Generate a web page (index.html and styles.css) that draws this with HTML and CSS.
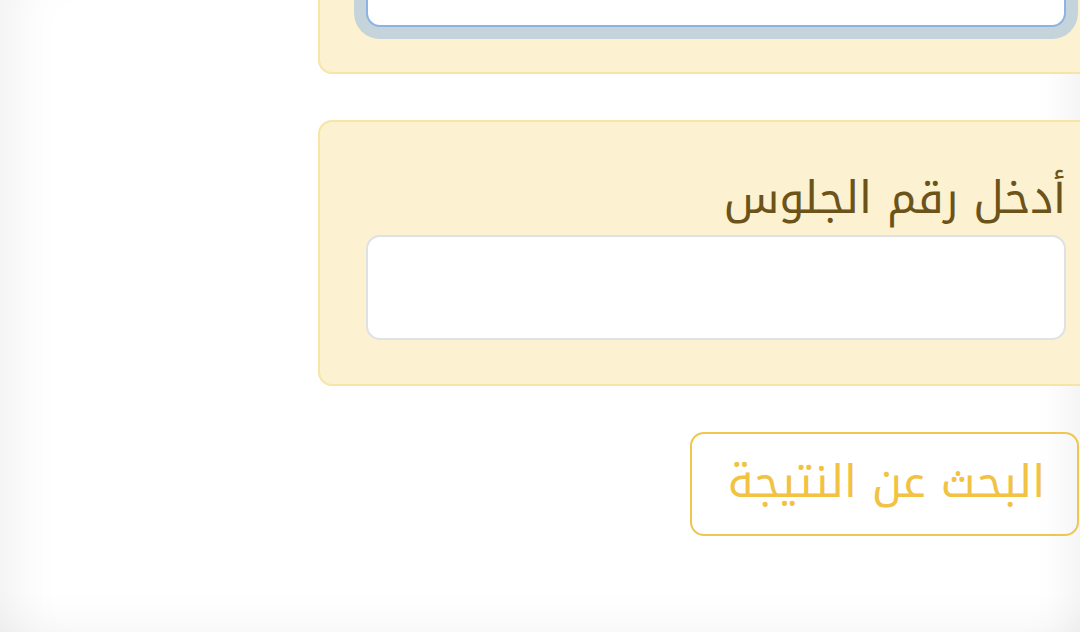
FILE: index.html
```html
<!DOCTYPE html>
<html lang="ar" dir="rtl">
<head>
  <meta charset="UTF-8" />
  <meta name="viewport" content="width=device-width, initial-scale=1.0"/>
  <title>نتيجة الامتحان</title>
  <link rel="stylesheet" href="styles.css">
</head>
<body>
  <div class="page">
    <div class="content">
      <div class="field-card first">
        <input type="text" id="name" class="field-input focused" />
      </div>

      <div class="field-card">
        <label class="field-label" for="seat">أدخل رقم الجلوس</label>
        <input type="text" id="seat" class="field-input" />
      </div>

      <div class="actions">
        <button class="search-btn">البحث عن النتيجة</button>
      </div>
    </div>
  </div>
</body>
</html>
```

FILE: styles.css
```css
* { margin: 0; padding: 0; box-sizing: border-box; }

html, body {
  height: 100%;
  overflow: hidden;
}

body {
  font-family: "Noto Kufi Arabic", "DejaVu Sans", sans-serif;
  background: #ffffff;
}

.page {
  height: 632px;
  width: 1080px;
  overflow: hidden;
  box-shadow:
    inset 50px 0 50px -35px rgba(0, 0, 0, 0.06),
    inset -40px 0 40px -30px rgba(0, 0, 0, 0.06),
    inset 0 -40px 40px -30px rgba(0, 0, 0, 0.04);
}

.content {
  margin-left: 318px;
  margin-top: -126px;
}

.field-card {
  background-color: #fcf1d0;
  border: 2px solid #f7e4a6;
  border-radius: 14px;
  padding: 46px 46px 44px 46px;
  margin-right: -34px;
  margin-bottom: 46px;
  display: flex;
  flex-direction: column;
}

.field-card.first {
  padding-bottom: 45px;
}

.field-label {
  font-size: 44.7px;
  line-height: 60px;
  color: #6b5319;
  margin-bottom: 7px;
}

.field-input {
  height: 105px;
  width: 100%;
  background: #ffffff;
  border: 2px solid #dee2e6;
  border-radius: 14px;
  font-size: 36px;
  font-family: inherit;
  outline: none;
}

.field-input.focused {
  border-color: #8db2e6;
  box-shadow: 0 0 0 12px #c5d3da;
}

.actions {
  display: flex;
  justify-content: flex-start;
  padding-right: 1px;
}

.search-btn {
  height: 104px;
  padding: 0 32px 4px 36px;
  font-family: inherit;
  font-size: 44.5px;
  color: #f1c244;
  background: transparent;
  border: 2px solid #f0c650;
  border-radius: 14px;
  cursor: pointer;
}
```
